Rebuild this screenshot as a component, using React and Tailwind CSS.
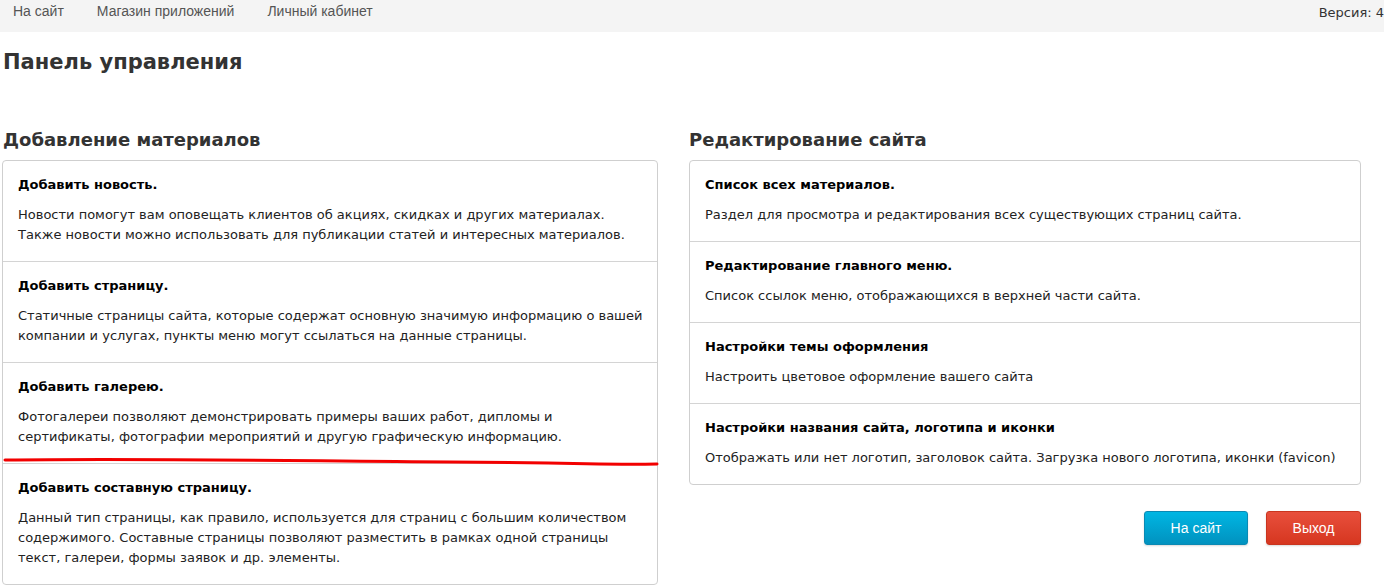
import React from "react";

const leftItems = [
  {
    t: "Добавить новость.",
    d: [
      "Новости помогут вам оповещать клиентов об акциях, скидках и других материалах.",
      "Также новости можно использовать для публикации статей и интересных материалов.",
    ],
  },
  {
    t: "Добавить страницу.",
    d: [
      "Статичные страницы сайта, которые содержат основную значимую информацию о вашей",
      "компании и услугах, пункты меню могут ссылаться на данные страницы.",
    ],
  },
  {
    t: "Добавить галерею.",
    d: [
      "Фотогалереи позволяют демонстрировать примеры ваших работ, дипломы и",
      "сертификаты, фотографии мероприятий и другую графическую информацию.",
    ],
  },
  {
    t: "Добавить составную страницу.",
    d: [
      "Данный тип страницы, как правило, используется для страниц с большим количеством",
      "содержимого. Составные страницы позволяют разместить в рамках одной страницы",
      "текст, галереи, формы заявок и др. элементы.",
    ],
  },
];

const rightItems = [
  { t: "Список всех материалов.", d: ["Раздел для просмотра и редактирования всех существующих страниц сайта."] },
  { t: "Редактирование главного меню.", d: ["Список ссылок меню, отображающихся в верхней части сайта."] },
  { t: "Настройки темы оформления", d: ["Настроить цветовое оформление вашего сайта"] },
  {
    t: "Настройки названия сайта, логотипа и иконки",
    d: ["Отображать или нет логотип, заголовок сайта. Загрузка нового логотипа, иконки (favicon)"],
  },
];

function Item({ item, first }) {
  return (
    <div className={`${first ? "" : "border-t border-[#d4d4d4]"} px-[15px] pt-[14px] pb-[16px]`}>
      <div className="text-[13px] leading-[20px] font-bold text-black">{item.t}</div>
      <div className="mt-[10px] text-[13px] leading-[20px] text-[#222]">
        {item.d.map((l, i) => (
          <div key={i} className="whitespace-nowrap">{l}</div>
        ))}
      </div>
    </div>
  );
}

export default function App() {
  return (
    <div className="relative w-[1384px] h-[585px] overflow-hidden bg-white text-[#333]" style={{ fontFamily: '"DejaVu Sans", sans-serif' }}>
      <div className="h-[32px] bg-[#f4f4f4] flex items-start justify-between">
        <div className="flex pl-[13px] pt-[3px] gap-[33px] text-[14px] leading-[16px] text-[#555]" style={{ fontFamily: '"Liberation Sans", Arial, sans-serif' }}>
          <span>На сайт</span>
          <span>Магазин приложений</span>
          <span>Личный кабинет</span>
        </div>
        <div className="pt-[5px] text-[13px] leading-[16px] text-[#333] whitespace-nowrap">Версия: 4</div>
      </div>

      <h1 className="ml-[3px] mt-[15px] text-[21px] leading-[30px] font-bold text-[#333]">Панель управления</h1>

      <div className="flex mt-[52px] ml-[2px]">
        <div className="w-[656px]">
          <h2 className="ml-[1px] text-[18px] leading-[22px] font-bold text-[#333]">Добавление материалов</h2>
          <div className="mt-[9px] border border-[#cfcfcf] rounded-[4px] bg-white">
            {leftItems.map((it, i) => (
              <Item key={i} item={it} first={i === 0} />
            ))}
          </div>
        </div>
        <div className="w-[672px] ml-[31px]">
          <h2 className="text-[18px] leading-[22px] font-bold text-[#333]">Редактирование сайта</h2>
          <div className="mt-[9px] border border-[#cfcfcf] rounded-[4px] bg-white">
            {rightItems.map((it, i) => (
              <Item key={i} item={it} first={i === 0} />
            ))}
          </div>
          <div className="flex justify-end gap-[18px] mt-[26px]" style={{ fontFamily: '"Liberation Sans", Arial, sans-serif' }}>
            <button className="w-[104px] h-[34px] rounded-[3px] border border-[#0a89b3] bg-gradient-to-b from-[#00b6e3] to-[#0192bf] text-white text-[14px] shadow-[0_1px_2px_rgba(0,0,0,0.15)]">
              На сайт
            </button>
            <button className="w-[95px] h-[34px] rounded-[3px] border border-[#c9351f] bg-gradient-to-b from-[#e84f3c] to-[#d6361f] text-white text-[14px] shadow-[0_1px_2px_rgba(0,0,0,0.15)]">
              Выход
            </button>
          </div>
        </div>
      </div>

      <svg className="absolute left-0 top-0 pointer-events-none" width="1384" height="585">
        <path d="M5 460 C 150 458, 300 461, 450 462 S 600 465, 657 464" stroke="#f20000" strokeWidth="3" fill="none" strokeLinecap="round" />
      </svg>
    </div>
  );
}
